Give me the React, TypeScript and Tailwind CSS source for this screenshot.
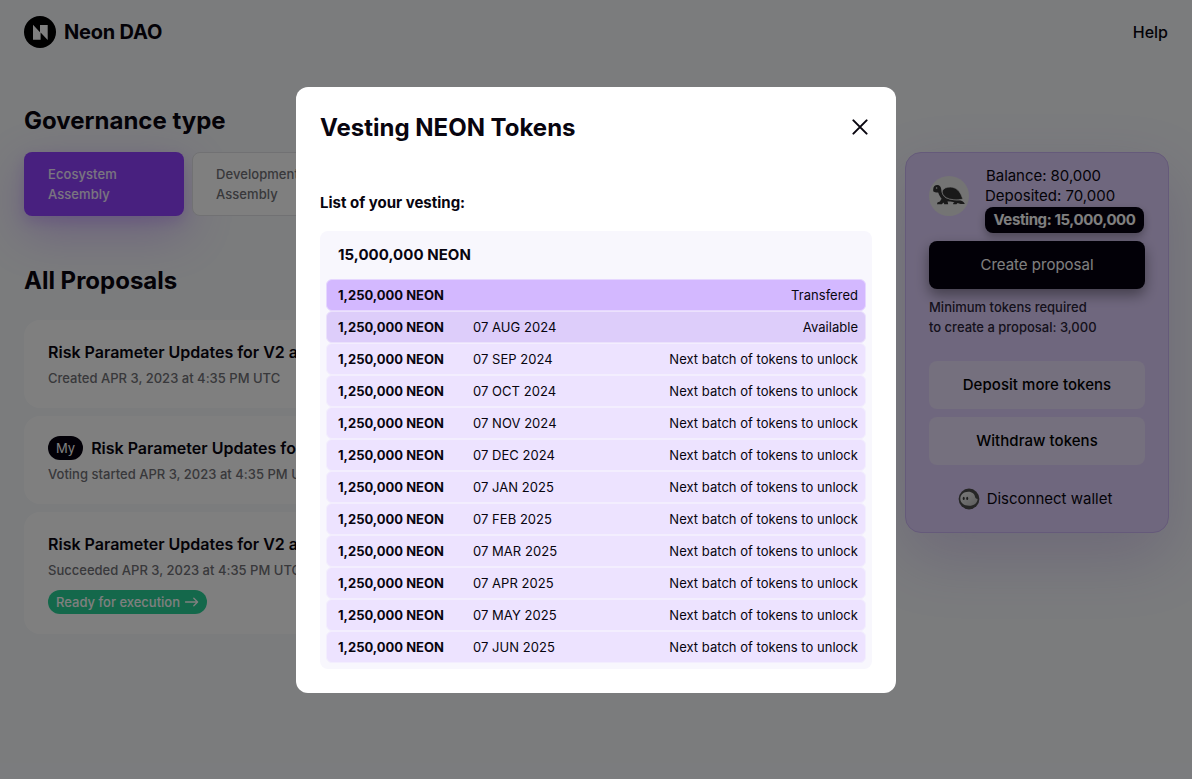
import React from "react";

type Proposal = { title: string; meta: string; mine?: boolean; ready?: boolean };
type Batch = { date: string; status: string; tone: string };

const proposals: Proposal[] = [
  { title: "Risk Parameter Updates for V2 and", meta: "Created APR 3, 2023 at 4:35 PM UTC" },
  { title: "Risk Parameter Updates for", meta: "Voting started APR 3, 2023 at 4:35 PM UTC", mine: true },
  { title: "Risk Parameter Updates for V2 and", meta: "Succeeded APR 3, 2023 at 4:35 PM UTC", ready: true },
];

const upcoming = [
  "07 SEP 2024",
  "07 OCT 2024",
  "07 NOV 2024",
  "07 DEC 2024",
  "07 JAN 2025",
  "07 FEB 2025",
  "07 MAR 2025",
  "07 APR 2025",
  "07 MAY 2025",
  "07 JUN 2025",
];

const batches: Batch[] = [
  { date: "", status: "Transfered", tone: "bg-[#d3b8ff] border-[#e6d7ff]" },
  { date: "07 AUG 2024", status: "Available", tone: "bg-[#ddcdfa] border-[#ebe1fc]" },
  ...upcoming.map((date) => ({
    date,
    status: "Next batch of tokens to unlock",
    tone: "bg-[#ede3ff] border-[#f3eefe]",
  })),
];

function Logo() {
  return (
    <svg width="32" height="32" viewBox="0 0 32 32">
      <circle cx="16" cy="16" r="16" fill="#000" />
      <path d="M9 8.8L16 16.2V9H23.7V23.9L16.6 16.4V23.7H9Z" fill="#fff" />
    </svg>
  );
}

function Turtle() {
  return (
    <svg width="40" height="40" viewBox="0 0 40 40">
      <circle cx="20" cy="20" r="20" fill="#e8e8e8" />
      <path
        d="M4.2 13.2C4.2 10.6 6.2 9 8.3 9.1C10.6 9.2 12 10.9 12.2 12.9C12.4 15.6 13 17.7 14.8 20.2L16.7 22.1C19.5 23.5 24.4 24.6 29.6 24.2C32.3 24.1 35 25.8 35.9 27.8C34.2 28.3 31.6 28.2 30 27.5L28.7 27L27.4 28.2H24.2V27.1L25.5 25.9C23.1 26 20.4 25.8 18.6 25.3L19.2 28.2H15.3L14.6 26.4L12.8 28.2H8L8.4 26.5L10.9 25.4L12.6 22.8C11 20.9 10 18.8 9.2 16.6C7 16.5 4.9 16.3 4.2 15.3Z"
        fill="#333"
      />
      <path
        d="M13.3 14.9C14.5 12.2 17.6 10.9 21.8 11.1C26.4 11.4 30 14.2 32 18.6C32.7 20 33 21.4 34 23.1C28.2 24.6 21 23.9 17.2 21.7C14.2 19.8 12.8 17.1 13.3 14.9Z"
        fill="#333"
        stroke="#e8e8e8"
        strokeWidth=".7"
      />
      <circle cx="7.6" cy="12" r=".8" fill="#e8e8e8" />
    </svg>
  );
}

function WalletGhost() {
  return (
    <svg width="22" height="22" viewBox="0 0 22 22">
      <defs>
        <linearGradient id="ghost" x1="0" y1="0" x2="1" y2="1">
          <stop offset="0" stopColor="#f4f4f4" />
          <stop offset="1" stopColor="#bcbcbc" />
        </linearGradient>
      </defs>
      <circle cx="11" cy="11" r="10.4" fill="#4c4c4c" />
      <path
        d="M2.3 10.8C2.3 6.6 5.8 3.8 10.2 3.8C14.4 3.8 16.6 6.2 17 8.8C17.3 10.6 18.5 10.8 19.6 11C19.4 15 16 17.8 11.2 17.8C6 17.8 2.3 15 2.3 10.8Z"
        fill="url(#ghost)"
      />
      <ellipse cx="5.7" cy="10.4" rx="1" ry="1.6" fill="#3c3c3c" />
      <ellipse cx="9.2" cy="10.4" rx="1" ry="1.6" fill="#3c3c3c" />
    </svg>
  );
}

function ProposalCard({ title, meta, mine, ready }: Proposal) {
  return (
    <article className="rounded-2xl bg-white px-6 pt-5 pb-5">
      <div className="flex h-6 items-center gap-2">
        {mine && (
          <span className="flex h-6 items-center rounded-full bg-[#05000e] px-2 pt-px text-[13px] text-white">My</span>
        )}
        <h3 className="text-base font-semibold whitespace-nowrap">{title}</h3>
      </div>
      <p className="mt-1 h-5 overflow-hidden text-[13px] leading-5 font-medium tracking-[0.001em] whitespace-nowrap text-[#717176]">{meta}</p>
      {ready && (
        <div className="mt-[10px] flex">
          <span className="flex h-6 items-center gap-1 rounded-full bg-[#28d196] px-2 text-[13px] font-medium text-white">
            <span className="pt-px">Ready for execution</span>
            <svg width="15" height="12" viewBox="0 0 15 12" fill="none" stroke="#fff" strokeWidth="1.3" strokeLinecap="round" strokeLinejoin="round">
              <path d="M1.5 6H13.5M9.8 2.2L13.6 6L9.8 9.8" />
            </svg>
          </span>
        </div>
      )}
    </article>
  );
}

function Sidebar() {
  return (
    <aside className="mt-[88px] h-[381px] w-[264px] shrink-0 rounded-2xl border border-[#cbb4f4] bg-[#dfcffc] px-[23px] pt-[13px] shadow-[0_24px_64px_rgba(110,60,200,0.2)]">
      <div className="flex h-[67px] gap-4">
        <div className="pt-[10px]">
          <Turtle />
        </div>
        <div className="text-[15px] leading-5">
          <p className="pl-px tracking-[-0.003em]">Balance: 80,000</p>
          <p>Deposited: 70,000</p>
          <p className="mt-[1px] flex h-[26px] w-[159px] items-center justify-center rounded-lg bg-[#05000e] font-bold tracking-[-0.4px] whitespace-nowrap text-white shadow-[0_4px_8px_rgba(0,0,0,0.3)]">
            Vesting: 15,000,000
          </p>
        </div>
      </div>
      <button className="mt-[8px] h-12 w-full rounded-lg bg-[#05000e] text-[15px] text-white shadow-[0_6px_14px_rgba(0,0,0,0.4)]">
        Create proposal
      </button>
      <p className="mt-[8px] text-[13px] leading-5 font-medium text-[#2a2338]">
        Minimum tokens required
        <br />
        to create a proposal: 3,000
      </p>
      <div className="mt-6 flex flex-col gap-2">
        <button className="h-12 rounded-lg bg-white/35 text-[15px] font-medium tracking-[0.003em] text-black">Deposit more tokens</button>
        <button className="h-12 rounded-lg bg-white/35 text-[15px] font-medium tracking-[0.003em] text-black">Withdraw tokens</button>
      </div>
      <button className="mt-[23px] flex w-full items-center justify-center gap-[7px] pr-1 text-[15px] whitespace-nowrap">
        <WalletGhost />
        Disconnect wallet
      </button>
    </aside>
  );
}

function VestingDialog() {
  return (
    <section role="dialog" className="h-[606px] w-[600px] rounded-xl bg-white px-6 pt-6">
      <div className="flex h-8 items-center justify-between">
        <h2 className="pt-[2px] text-2xl font-bold tracking-normal">Vesting NEON Tokens</h2>
        <button aria-label="Close" className="mr-1">
          <svg width="16" height="16" viewBox="0 0 16 16" fill="none" stroke="#08050f" strokeWidth="2" strokeLinecap="round">
            <path d="M1.4 1.4L14.6 14.6M14.6 1.4L1.4 14.6" />
          </svg>
        </button>
      </div>
      <p className="mt-12 text-[15px] leading-6 font-bold">List of your vesting:</p>
      <div className="mt-4 h-[438px] rounded-lg bg-[#f8f7fd] px-[6px]">
        <p className="flex h-12 items-center pl-3 text-[15px] font-bold tracking-[0.003em]">15,000,000 NEON</p>
        <ul>
          {batches.map((batch, index) => (
            <li key={index} className={`flex h-8 items-center rounded-md border pt-px pr-[7px] pl-[11px] text-[13px] ${batch.tone}`}>
              <span className="w-[135px] font-bold">1,250,000 NEON</span>
              <span className="tracking-[0.003em]">{batch.date}</span>
              <span className="ml-auto tracking-[0.002em]">{batch.status}</span>
            </li>
          ))}
        </ul>
      </div>
    </section>
  );
}

export default function App() {
  return (
    <div className="relative h-[779px] w-full overflow-hidden bg-[#f6f8fb] font-['Inter',sans-serif] text-[#08050f]">
      <header className="flex h-16 items-center justify-between px-6">
        <div className="flex items-center gap-2">
          <Logo />
          <span className="text-xl font-bold tracking-[-0.01em]">Neon DAO</span>
        </div>
        <span className="text-base font-medium">Help</span>
      </header>
      <main className="flex gap-8 pr-[23px] pl-6">
        <div className="min-w-0 flex-1 pt-[41px]">
          <h2 className="text-2xl leading-8 font-bold">Governance type</h2>
          <div className="mt-[15px] flex gap-2">
            <div className="h-16 w-40 rounded-lg bg-[#9141ff] px-6 py-3 text-[13px] leading-5 font-medium tracking-[0.005em] text-white/90 shadow-[0_16px_48px_rgba(145,65,255,0.3),0_6px_14px_rgba(145,65,255,0.2)]">
              Ecosystem
              <br />
              Assembly
            </div>
            <div className="h-16 w-40 rounded-lg border border-[#e2e2e6] bg-white px-[23px] py-[11px] text-[13px] leading-5 font-medium tracking-[0.005em] text-[#717176]">
              Development
              <br />
              Assembly
            </div>
          </div>
          <h2 className="mt-[49px] text-2xl leading-8 font-bold">All Proposals</h2>
          <div className="mt-[23px] flex flex-col gap-2">
            {proposals.map((proposal, index) => (
              <ProposalCard key={index} {...proposal} />
            ))}
          </div>
        </div>
        <Sidebar />
      </main>
      <div className="absolute inset-0 flex items-start justify-center bg-black/50 pt-[87px]">
        <VestingDialog />
      </div>
    </div>
  );
}
